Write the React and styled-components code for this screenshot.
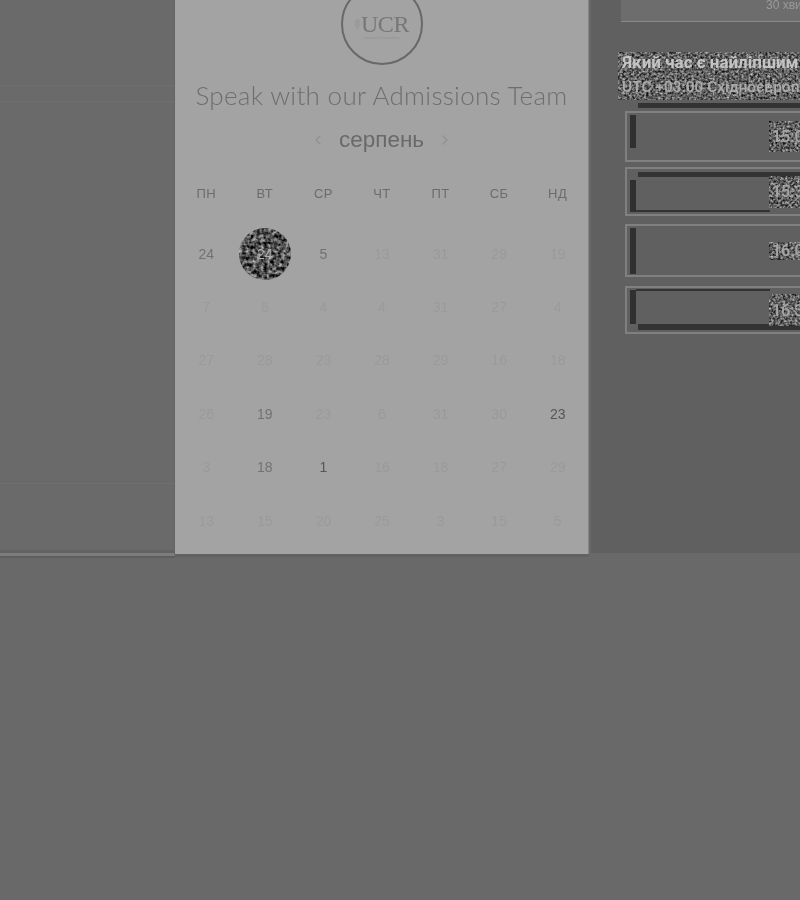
import React, { useId } from "react"
import styled, { createGlobalStyle } from "styled-components"

const weeks = [
  [24, 24, 5, 13, 31, 29, 19],
  [7, 6, 4, 4, 31, 27, 4],
  [27, 28, 23, 28, 29, 16, 18],
  [26, 19, 23, 6, 31, 30, 23],
  [3, 18, 1, 16, 18, 27, 29],
  [13, 15, 20, 25, 3, 15, 5],
]
const active = { "0-0": 1, "0-2": 1, "3-1": 1, "3-6": 2, "4-1": 1, "4-2": 2 }
const days = ["пн", "вт", "ср", "чт", "пт", "сб", "нд"]

// heights and dark strips differ per row in the reference
const slots = [
  { time: "15:00", height: 51, gap: 0, bar: [2, 33], chip: 31, strips: ["above"] },
  { time: "15:30", height: 49, gap: 5, bar: [11, 32], chip: 32, strips: ["top", "thinBottom"] },
  { time: "16:00", height: 53, gap: 8, bar: [2, 46], chip: 18, strips: [] },
  { time: "16:30", height: 48, gap: 9, bar: [2, 34], chip: 32, strips: ["thinTop", "bottom"] },
]

const stripPlace = {
  above: "top: -10px; left: 11px; right: 0; height: 5px;",
  top: "top: 3px; left: 11px; right: 0; height: 5px;",
  bottom: "bottom: 2px; left: 11px; right: 0; height: 6px;",
  thinTop: "top: 1px; left: 9px; right: 75px; height: 2px;",
  thinBottom: "bottom: 2px; left: 9px; right: 75px; height: 2px;",
}

const Global = createGlobalStyle`
  html, body { margin: 0; padding: 0; background: #696969; }
  body { font-family: "Liberation Sans", Arial, sans-serif; }
`

function Speckle({ freq = 0.42, seed = 7, gain = 1.05, shift = -0.15 }) {
  const id = useId().replace(/:/g, "")
  const row = `${gain} 0 0 0 ${shift}`
  return (
    <SpeckleSvg aria-hidden="true">
      <filter id={id} x="0" y="0" width="100%" height="100%" colorInterpolationFilters="sRGB">
        <feTurbulence type="fractalNoise" baseFrequency={freq} numOctaves="2" seed={seed} />
        <feColorMatrix type="matrix" values={`${row}  ${row}  ${row}  0 0 0 0 1`} />
      </filter>
      <rect width="100%" height="100%" filter={`url(#${id})`} />
    </SpeckleSvg>
  )
}

function Slot({ time, height, gap, bar, chip, strips }) {
  return (
    <SlotRow $height={height} $gap={gap}>
      {strips.map((s) => <Strip key={s} $place={s} />)}
      <SlotBar $top={bar[0]} $height={bar[1]} />
      <SlotTime $height={chip}>
        <Speckle seed={height} />
        <span>{time}</span>
      </SlotTime>
    </SlotRow>
  )
}

export default function App() {
  return (
    <Page>
      <Global />
      <Frame>
        <LeftPane>
          <Rule />
          <Rule />
          <BottomRule />
        </LeftPane>
        <CalendarPane>
          <Logo>
            <LogoRow>
              <Shield viewBox="0 0 8 14"><path d="M1 3 4 .5 7 3v6l-3 4.5L1 9z" /></Shield>
              <LogoMark>UCR</LogoMark>
            </LogoRow>
            <LogoSub>University of Central Rome</LogoSub>
          </Logo>
          <Title>Speak with our Admissions Team</Title>
          <MonthRow>
            <Arrow viewBox="0 0 8 12"><path d="M6.5 1.5 2 6l4.5 4.5" /></Arrow>
            <Month>серпень</Month>
            <Arrow viewBox="0 0 8 12"><path d="M1.5 1.5 6 6l-4.5 4.5" /></Arrow>
          </MonthRow>
          <Grid>
            {days.map((d) => <WeekDay key={d}>{d}</WeekDay>)}
            {weeks.map((week, r) =>
              week.map((n, c) =>
                r === 0 && c === 1 ? (
                  <Cell key={`${r}-${c}`}>
                    <Selected>
                      <Speckle freq={0.28} seed={3} gain={1.3} shift={-0.33} />
                      <span>{n}</span>
                    </Selected>
                  </Cell>
                ) : (
                  <Cell key={`${r}-${c}`} $level={active[`${r}-${c}`] || 0}>{n}</Cell>
                )
              )
            )}
          </Grid>
        </CalendarPane>
        <TimePane>
          <DurationCard>30 хвилин</DurationCard>
          <Question>
            <Speckle seed={11} />
            <QuestionTitle>Який час є найліпшим для вас?</QuestionTitle>
            <Zone>UTC +03:00 Східноєвропейський час</Zone>
          </Question>
          <Slots>
            {slots.map((s) => <Slot key={s.time} {...s} />)}
          </Slots>
        </TimePane>
      </Frame>
    </Page>
  )
}

const Page = styled.div`
  width: 800px;
  height: 900px;
  overflow: hidden;
  background: #696969;
  filter: grayscale(1);
`

const Frame = styled.div`
  display: flex;
  align-items: flex-start;
`

const LeftPane = styled.div`
  width: 175px;
  height: 556px;
  flex: none;
  box-sizing: border-box;
  padding-top: 85px;
  background: #6a6a6a;
  display: flex;
  flex-direction: column;
  border-right: 1px solid #636363;
  border-bottom: 3px solid #7c7c7c;
  box-shadow: 0 2px 0 #5e5e5e;
`

const Rule = styled.div`
  height: 15px;
  border-top: 1px solid #6f6f6f;
`

const BottomRule = styled.div`
  margin-top: auto;
  height: 70px;
  box-sizing: border-box;
  border-top: 1px solid #6f6f6f;
  border-bottom: 3px solid #626262;
`

const CalendarPane = styled.div`
  width: 414px;
  height: 554px;
  flex: none;
  box-sizing: border-box;
  background: #a3a3a3;
  border-right: 1px solid #858585;
  box-shadow: 0 3px 0 #626262;
  display: flex;
  flex-direction: column;
  align-items: center;
  overflow: hidden;

  > * {
    filter: blur(0.3px);
  }
`

const Logo = styled.div`
  width: 78px;
  height: 78px;
  margin-top: -17px;
  border: 2px solid #686868;
  border-radius: 50%;
  display: flex;
  flex-direction: column;
  align-items: center;
  justify-content: center;
  flex: none;
`

const LogoRow = styled.div`
  margin-top: 5px;
  display: flex;
  align-items: center;
`

const Shield = styled.svg`
  width: 7px;
  height: 14px;
  fill: #9b9b9b;
`

const LogoMark = styled.div`
  font-family: "Liberation Serif", serif;
  font-size: 24px;
  line-height: 22px;
  letter-spacing: -0.4px;
  color: #777777;
`

const LogoSub = styled.div`
  margin-top: 1px;
  font-size: 3px;
  line-height: 5px;
  white-space: nowrap;
  color: #919191;
`

const Title = styled.h1`
  margin: 15px 0 0;
  font-family: Lato, sans-serif;
  font-size: 26px;
  line-height: 30px;
  font-weight: 300;
  letter-spacing: 0.3px;
  color: #6e6e6e;
  white-space: nowrap;
`

const MonthRow = styled.div`
  margin-top: 15px;
  height: 30px;
  display: flex;
  align-items: center;
  gap: 17px;
`

const Month = styled.div`
  font-size: 22.5px;
  color: #696969;
`

const Arrow = styled.svg`
  width: 8px;
  height: 12px;
  fill: none;
  stroke: #909090;
  stroke-width: 1.2;
`

const Grid = styled.div`
  margin-top: 28px;
  margin-left: 1px;
  width: 410px;
  display: grid;
  grid-template-columns: repeat(7, 1fr);
  grid-template-rows: 20px repeat(6, 53.4px);
`

const WeekDay = styled.div`
  display: flex;
  align-items: center;
  justify-content: center;
  font-size: 13px;
  letter-spacing: 0.5px;
  text-transform: uppercase;
  color: #6c6c6c;
`

const Cell = styled.div`
  position: relative;
  top: 24px;
  display: flex;
  align-items: center;
  justify-content: center;
  font-size: 14px;
  color: ${(p) => (p.$level === 2 ? "#565656" : p.$level === 1 ? "#727272" : "#9a9a9a")};
`

const Selected = styled.div`
  position: relative;
  width: 52px;
  height: 52px;
  border-radius: 50%;
  overflow: hidden;
  flex: none;
  display: flex;
  align-items: center;
  justify-content: center;
  font-size: 14px;
  color: #b0b0b0;

  > span {
    position: relative;
  }
`

const SpeckleSvg = styled.svg`
  position: absolute;
  inset: 0;
  width: 100%;
  height: 100%;
`

const TimePane = styled.div`
  flex: 1;
  min-width: 0;
  height: 553px;
  margin-left: 2px;
  background: #606060;
  overflow: hidden;
  box-sizing: border-box;
  padding-left: 30px;
`

const DurationCard = styled.div`
  height: 22px;
  box-sizing: border-box;
  padding-left: 145px;
  background: #6d6d6d;
  border-bottom: 1px solid #8a8a8a;
  font-size: 12px;
  line-height: 10px;
  white-space: nowrap;
  color: #9a9a9a;
`

const Question = styled.div`
  position: relative;
  margin-top: 30px;
  margin-left: -3px;
  height: 48px;
  width: 190px;
  box-sizing: border-box;
  padding-left: 4px;
  overflow: hidden;
  white-space: nowrap;
`

const QuestionTitle = styled.div`
  position: relative;
  margin-top: 1px;
  font-family: Roboto, sans-serif;
  font-size: 17px;
  line-height: 18px;
  font-weight: 700;
  color: #c4c4c4;
`

const Zone = styled.div`
  position: relative;
  margin-top: 7px;
  font-family: Roboto, sans-serif;
  font-size: 15.5px;
  line-height: 18px;
  font-weight: 500;
  color: #ababab;
`

const Slots = styled.div`
  margin-top: 11px;
  margin-left: 4px;
  display: flex;
  flex-direction: column;
`

const SlotRow = styled.div`
  position: relative;
  flex: none;
  height: ${(p) => p.$height}px;
  margin-top: ${(p) => p.$gap}px;
  width: 220px;
  box-sizing: border-box;
  display: flex;
  align-items: center;
  border: 2px solid #808080;
  border-right: none;
  padding-left: 3px;
`

const Strip = styled.div`
  position: absolute;
  background: #333333;
  ${(p) => stripPlace[p.$place]}
`

const SlotBar = styled.div`
  position: absolute;
  left: 3px;
  top: ${(p) => p.$top}px;
  width: 6px;
  height: ${(p) => p.$height}px;
  background: #303030;
`

const SlotTime = styled.div`
  position: relative;
  margin-left: 139px;
  width: 40px;
  height: ${(p) => p.$height}px;
  display: flex;
  align-items: center;
  overflow: hidden;
  font-family: Roboto, sans-serif;
  font-size: 16px;
  font-weight: 500;
  color: #a6a6a6;

  > span {
    position: relative;
    padding-left: 3px;
  }
`
